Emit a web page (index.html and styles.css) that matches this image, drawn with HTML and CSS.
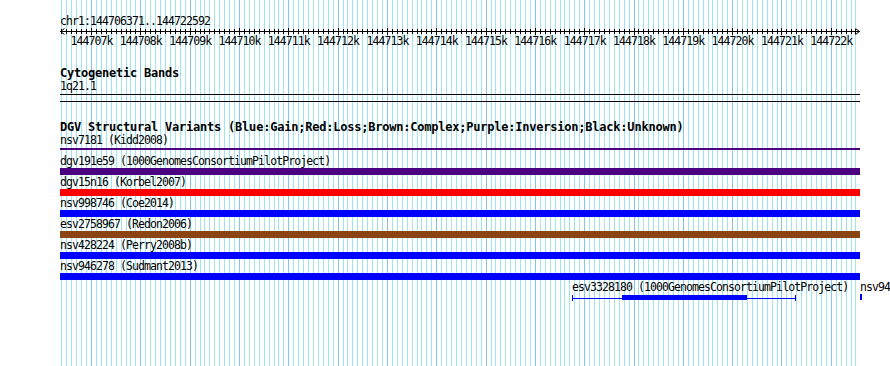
FILE: index.html
```html
<!DOCTYPE html>
<html lang="en">
<head>
    <meta charset="UTF-8">
    <title>chr1:144706371..144722592</title>
    <link rel="stylesheet" href="styles.css">
</head>
<body>
    <div class="panel">
        <!-- background grid: minor line every 100 bp, major every 1 kb -->
        <svg class="grid" width="800" height="366">
            <line class="grid-minor" x1="1.43" y1="183" x2="800" y2="183" />
            <line class="grid-major" x1="31.02" y1="183" x2="800" y2="183" />
        </svg>

        <section class="ruler">
            <div class="label">chr1:144706371..144722592</div>
            <svg class="axis" width="800" height="7">
                <line class="axis-minor" x1="1.43" y1="3.5" x2="800" y2="3.5" />
                <line class="axis-major" x1="31.02" y1="3.5" x2="800" y2="3.5" />
                <rect class="axis-line" x="0" y="3" width="800" height="1" />
                <path class="axis-arrow" d="M4.5 0.5 L0.5 3.5 L4.5 6.5 M795.5 0.5 L799.5 3.5 L795.5 6.5" />
            </svg>
            <div class="ticks">
                <span>144707k</span><span>144708k</span><span>144709k</span><span>144710k</span>
                <span>144711k</span><span>144712k</span><span>144713k</span><span>144714k</span>
                <span>144715k</span><span>144716k</span><span>144717k</span><span>144718k</span>
                <span>144719k</span><span>144720k</span><span>144721k</span><span>144722k</span>
            </div>
        </section>

        <section class="track cyto">
            <h2 class="track-title">Cytogenetic Bands</h2>
            <div class="label">1q21.1</div>
            <div class="band"></div>
        </section>

        <section class="track dgv">
            <h2 class="track-title">DGV Structural Variants (Blue:Gain;Red:Loss;Brown:Complex;Purple:Inversion;Black:Unknown)</h2>
            <div class="feature">
                <div class="label">nsv7181 (Kidd2008)</div>
                <div class="sv sv-line inversion"></div>
            </div>
            <div class="feature">
                <div class="label">dgv191e59 (1000GenomesConsortiumPilotProject)</div>
                <div class="sv inversion"></div>
            </div>
            <div class="feature">
                <div class="label">dgv15n16 (Korbel2007)</div>
                <div class="sv loss"></div>
            </div>
            <div class="feature">
                <div class="label">nsv998746 (Coe2014)</div>
                <div class="sv gain"></div>
            </div>
            <div class="feature">
                <div class="label">esv2758967 (Redon2006)</div>
                <div class="sv complex"></div>
            </div>
            <div class="feature">
                <div class="label">nsv428224 (Perry2008b)</div>
                <div class="sv gain"></div>
            </div>
            <div class="feature">
                <div class="label">nsv946278 (Sudmant2013)</div>
                <div class="sv gain"></div>
            </div>
            <div class="feature-row">
                <div class="hit" style="left: 512px;">
                    <div class="label">esv3328180 (1000GenomesConsortiumPilotProject)</div>
                    <div class="segments" style="width: 224px;">
                        <div class="block" style="margin-left: 49px; width: 125px;"></div>
                    </div>
                </div>
                <div class="hit" style="left: 800px;">
                    <div class="label">nsv94</div>
                    <div class="segments" style="width: 2px;"></div>
                </div>
            </div>
        </section>
    </div>
</body>
</html>
```

FILE: styles.css
```css
body {
    margin: 0;
    background-color: #ffffff;
}

.panel {
    position: relative;
    width: 890px;
    height: 366px;
    padding: 15px 0 0 60px;
    box-sizing: border-box;
    overflow: hidden;
    background-color: #ffffff;
    color: #000000;
    font-family: "DejaVu Sans Mono", "Liberation Mono", monospace;
    font-size: 11.5px;
    letter-spacing: -0.92px;
    line-height: 13px;
}

.grid {
    position: absolute;
    left: 60px;
    top: 0;
}

.grid line,
.axis line {
    shape-rendering: crispEdges;
}

.grid-minor {
    stroke: #a0e4ee;
    stroke-width: 366;
    stroke-dasharray: 1 3.9319;
}

.grid-major {
    stroke: #84c4ee;
    stroke-width: 366;
    stroke-dasharray: 1 48.319;
}

.ruler,
.track {
    position: relative;
}

.label {
    height: 13px;
    white-space: nowrap;
}

.axis {
    display: block;
}

.axis-minor {
    stroke: #000000;
    stroke-width: 5;
    stroke-dasharray: 1 3.9319;
}

.axis-major {
    stroke: #000000;
    stroke-width: 7;
    stroke-dasharray: 1 48.319;
}

.axis-line {
    fill: #000000;
    shape-rendering: crispEdges;
}

.axis-arrow {
    fill: none;
    stroke: #000000;
    stroke-width: 1;
}

.ticks {
    display: flex;
    padding-left: 6.86px;
    height: 13px;
    white-space: nowrap;
}

.ticks span {
    flex: 0 0 49.319px;
    text-align: center;
}

.track-title {
    margin: 0;
    height: 13px;
    font-size: 12px;
    letter-spacing: -0.22px;
    font-weight: bold;
    white-space: nowrap;
}

.cyto {
    margin-top: 19px;
}

.band {
    width: 800px;
    height: 6px;
    margin-top: 1px;
    border-top: 1px solid #000000;
    border-bottom: 1px solid #000000;
}

.dgv {
    margin-top: 19px;
}

.sv {
    width: 800px;
    height: 7px;
    margin-bottom: 1px;
}

.sv-line {
    height: 2px;
    margin: 1px 0 5px;
}

.gain {
    background-color: #0000ff;
}

.loss {
    background-color: #ff0000;
}

.complex {
    background-color: #8b4513;
}

.inversion {
    background-color: #4b0082;
}

.feature-row {
    position: relative;
    height: 20px;
}

.hit {
    position: absolute;
    top: 0;
}

.segments {
    position: relative;
    height: 6px;
    border-left: 1px solid #0000ff;
    border-right: 1px solid #0000ff;
    box-sizing: border-box;
    background: linear-gradient(#0000ff, #0000ff) 0 3px / 100% 1px no-repeat;
}

.block {
    height: 5px;
    margin-top: 1px;
    background-color: #0000ff;
}
```
